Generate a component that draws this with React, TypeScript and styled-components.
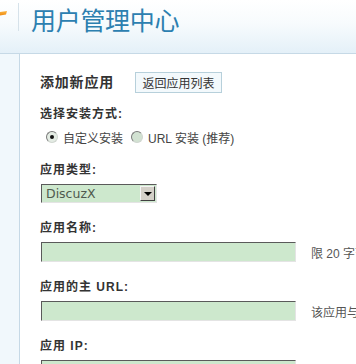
import React from 'react';
import styled, { createGlobalStyle } from 'styled-components';

const GlobalStyle = createGlobalStyle`
  html, body {
    margin: 0;
    padding: 0;
    background: #fff;
  }
  body {
    font-family: "Liberation Sans", "Noto Sans CJK SC", sans-serif;
    font-size: 12px;
    color: #333;
  }
  #root {
    width: 356px;
    height: 364px;
    overflow: hidden;
  }
`;

const Page = styled.div`
  display: flex;
  flex-direction: column;
  width: 100%;
  height: 100%;
`;

const Header = styled.header`
  display: flex;
  align-items: flex-start;
  height: 53px;
  flex-shrink: 0;
  border-bottom: 1px solid #c6d9e6;
  background: linear-gradient(to bottom, #ffffff 0%, #f7fbfd 45%, #e4f0f8 100%);
`;

const Logo = styled.div`
  display: flex;
  width: 19px;
  height: 28px;
  padding-top: 7px;
  border-right: 1px solid #d6e2ea;
  box-sizing: border-box;
  margin-top: 3px;
`;

const Title = styled.h1`
  margin: 5px 0 0 12px;
  font-family: "Noto Sans CJK SC", sans-serif;
  font-size: 25px;
  line-height: 28px;
  font-weight: 400;
  color: #2c80b0;
  letter-spacing: -0.3px;
`;

const Body = styled.div`
  display: flex;
  flex: 1;
`;

const Sidebar = styled.aside`
  width: 19px;
  flex-shrink: 0;
  background: #f1f8fc;
  border-right: 1px solid #c6d9e6;
`;

const Main = styled.main`
  flex: 1;
  padding: 18px 0 0 20px;
  white-space: nowrap;
`;

const TitleRow = styled.div`
  display: flex;
  align-items: center;
  height: 21px;
  gap: 21px;
`;

const PageHeading = styled.h2`
  margin: -3px 0 0;
  font-family: "Noto Sans CJK SC", sans-serif;
  font-size: 14px;
  letter-spacing: 0.8px;
  font-weight: 700;
  color: #333;
`;

const BackButton = styled.button`
  height: 21px;
  width: 87px;
  padding: 0;
  border: 1px solid #b7d0db;
  background: #f3f9fc;
  font-family: "Noto Sans CJK SC", sans-serif;
  font-size: 12px;
  color: #333;
`;

const Label = styled.div<{ $gap: number }>`
  margin-top: ${(p) => p.$gap}px;
  height: 20px;
  line-height: 20px;
  font-family: "Liberation Sans", "Noto Sans CJK SC", sans-serif;
  font-size: 12px;
  letter-spacing: 1px;
  font-weight: 700;
  color: #333;
`;

const RadioRow = styled.div`
  display: flex;
  align-items: center;
  height: 18px;
  margin-top: 4px;
  padding-left: 6px;
`;

const RadioOption = styled.label`
  display: flex;
  align-items: center;
  gap: 5px;
  margin-right: 8px;
  color: #444;
`;

const RadioDot = styled.span<{ $checked?: boolean }>`
  position: relative;
  width: 10px;
  height: 10px;
  border-radius: 50%;
  border: 1px solid;
  border-color: #7a7a7a #d0d6d0 #d0d6d0 #7a7a7a;
  background: ${(p) => (p.$checked ? '#e4ece4' : '#d2e2d2')};

  &::after {
    content: '';
    display: ${(p) => (p.$checked ? 'block' : 'none')};
    position: absolute;
    left: 3px;
    top: 3px;
    width: 4px;
    height: 4px;
    border-radius: 50%;
    background: #111;
  }
`;

const FieldRow = styled.div`
  display: flex;
  align-items: center;
  margin-top: 4px;
  padding-left: 1px;
`;

const SelectBox = styled.div`
  display: flex;
  align-items: center;
  justify-content: space-between;
  width: 116px;
  height: 19px;
  box-sizing: border-box;
  border: 1px solid;
  border-color: #5a5a5a #e4e4e4 #e4e4e4 #5a5a5a;
  background: #cde8cd;
  padding: 0 1px 0 4px;
`;

const SelectValue = styled.span`
  font-family: "DejaVu Sans", sans-serif;
  font-size: 12.5px;
  color: #4f5a4f;
`;

const SelectArrow = styled.span`
  display: flex;
  align-items: center;
  justify-content: center;
  width: 15px;
  height: 15px;
  box-sizing: border-box;
  background: #d4d0c8;
  border: 1px solid;
  border-color: #f4f4f4 #404040 #404040 #f4f4f4;

  &::after {
    content: '';
    border-left: 4px solid transparent;
    border-right: 4px solid transparent;
    border-top: 4px solid #000;
  }
`;

const TextInput = styled.input`
  width: 255px;
  height: 20px;
  box-sizing: border-box;
  margin: 0;
  padding: 0 4px;
  border: 1px solid;
  border-color: #5a5a5a #e4e4e4 #e4e4e4 #5a5a5a;
  background: #cde8cd;
  font-size: 12px;
`;

const Hint = styled.span`
  margin-left: 15px;
  font-family: "Liberation Sans", "Noto Sans CJK SC", sans-serif;
  font-size: 12px;
  color: #555;
`;

const LogoMark = () => (
  <svg width="8" height="6" viewBox="0 0 8 6">
    <defs>
      <linearGradient id="lg" x1="0" y1="0" x2="0" y2="1">
        <stop offset="0" stopColor="#fbb540" />
        <stop offset="1" stopColor="#ee8a10" />
      </linearGradient>
    </defs>
    <polygon points="0,2 7,1 6,4.5 0,5.5" fill="url(#lg)" />
  </svg>
);

export default function App() {
  return (
    <Page>
      <GlobalStyle />
      <Header>
        <Logo>
          <LogoMark />
        </Logo>
        <Title>用户管理中心</Title>
      </Header>
      <Body>
        <Sidebar />
        <Main>
          <TitleRow>
            <PageHeading>添加新应用</PageHeading>
            <BackButton type="button">返回应用列表</BackButton>
          </TitleRow>

          <Label $gap={11}>选择安装方式:</Label>
          <RadioRow>
            <RadioOption>
              <RadioDot $checked />
              自定义安装
            </RadioOption>
            <RadioOption>
              <RadioDot />
              URL 安装 (推荐)
            </RadioOption>
          </RadioRow>

          <Label $gap={14}>应用类型:</Label>
          <FieldRow>
            <SelectBox>
              <SelectValue>DiscuzX</SelectValue>
              <SelectArrow />
            </SelectBox>
          </FieldRow>

          <Label $gap={15}>应用名称:</Label>
          <FieldRow>
            <TextInput type="text" />
            <Hint>限 20 字节。</Hint>
          </FieldRow>

          <Label $gap={15}>应用的主 URL:</Label>
          <FieldRow>
            <TextInput type="text" />
            <Hint>该应用与用户中心通信的接口 URL</Hint>
          </FieldRow>

          <Label $gap={15}>应用 IP:</Label>
          <FieldRow>
            <TextInput type="text" />
            <Hint>正常情况下留空即可</Hint>
          </FieldRow>
        </Main>
      </Body>
    </Page>
  );
}
